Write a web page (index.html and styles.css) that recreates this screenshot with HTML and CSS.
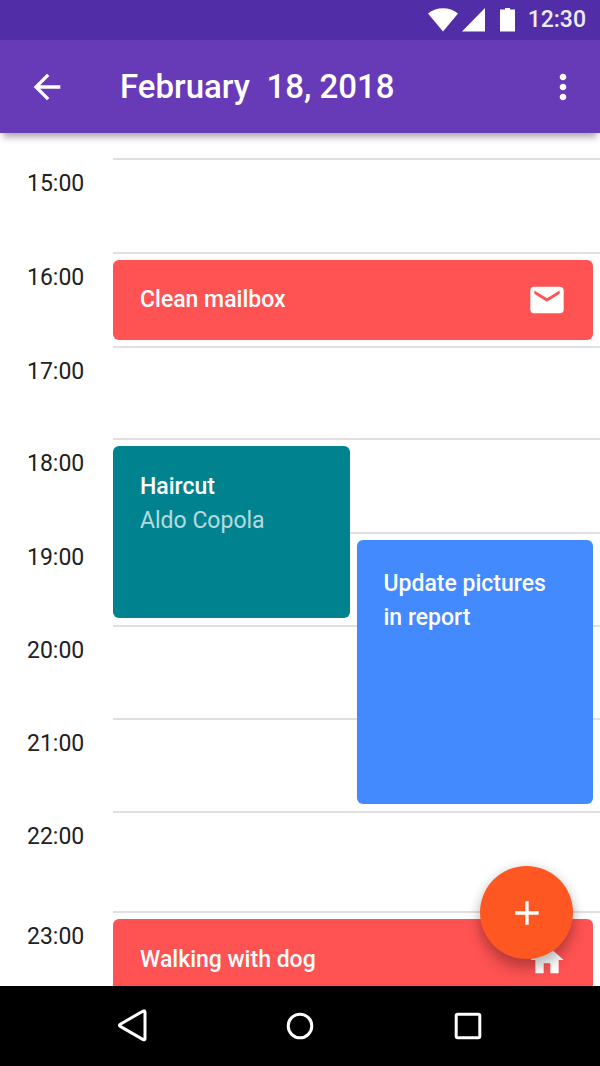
FILE: index.html
```html
<!DOCTYPE html>
<html lang="en">
<head>
<meta charset="utf-8">
<meta name="viewport" content="width=device-width, initial-scale=1">
<title>February 18, 2018</title>
<link rel="stylesheet" href="styles.css">
</head>
<body>
<div class="screen">
  <div class="status-bar">
    <svg class="status-icons" viewBox="0 0 88 24" aria-hidden="true">
      <path d="M0 5.5C8.500-1.500 21.500-1.500 30 5.500L15 23.500Z"/>
      <path d="M57 0V23.500H34Z"/>
      <path d="M72 1.500h5V0h5v1.500h5v22H72Z"/>
    </svg>
    <time class="clock">12:30</time>
  </div>

  <header class="app-bar">
    <button class="icon-button" type="button" aria-label="Back">
      <svg class="icon" viewBox="0 0 24 24"><path d="M20 11H7.830l5.590-5.590L12 4l-8 8 8 8 1.410-1.410L7.830 13H20z"/></svg>
    </button>
    <h1 class="app-title">February&nbsp; 18, 2018</h1>
    <button class="icon-button" type="button" aria-label="More options">
      <svg class="icon" viewBox="0 0 24 24"><path d="M12 8c1.100 0 2-.9 2-2s-.9-2-2-2-2 .9-2 2 .9 2 2 2zm0 2c-1.100 0-2 .9-2 2s.9 2 2 2 2-.9 2-2-.9-2-2-2zm0 6c-1.100 0-2 .9-2 2s.9 2 2 2 2-.9 2-2-.9-2-2-2z"/></svg>
    </button>
  </header>

  <main class="content">
    <div class="schedule">
      <time class="hour row-15">15:00</time><div class="line row-15"></div>
      <time class="hour row-16">16:00</time><div class="line row-16"></div>
      <time class="hour row-17">17:00</time><div class="line row-17"></div>
      <time class="hour row-18">18:00</time><div class="line row-18"></div>
      <time class="hour row-19">19:00</time><div class="line row-19"></div>
      <time class="hour row-20">20:00</time><div class="line row-20"></div>
      <time class="hour row-21">21:00</time><div class="line row-21"></div>
      <time class="hour row-22">22:00</time><div class="line row-22"></div>
      <time class="hour row-23">23:00</time><div class="line row-23"></div>

      <article class="event event-mailbox">
        <h2 class="event-title">Clean mailbox</h2>
        <svg class="icon event-icon" viewBox="0 0 24 24" aria-hidden="true"><path d="M20 4H4c-1.100 0-1.990.9-1.990 2L2 18c0 1.100.9 2 2 2h16c1.100 0 2-.9 2-2V6c0-1.100-.9-2-2-2zm-.4 4.250l-7.600 4.750-7.600-4.750V6.250L12 11l7.600-4.750z"/></svg>
      </article>
      <article class="event event-haircut">
        <div>
          <h2 class="event-title">Haircut</h2>
          <p class="event-note">Aldo Copola</p>
        </div>
      </article>
      <article class="event event-report">
        <h2 class="event-title">Update pictures in report</h2>
      </article>
      <article class="event event-dog">
        <h2 class="event-title">Walking with dog</h2>
        <svg class="icon event-icon" viewBox="0 0 24 24" aria-hidden="true"><path d="M10 20v-6h4v6h5v-8h3L12 3 2 12h3v8z"/></svg>
      </article>
    </div>
    <button class="fab" type="button" aria-label="Add event">
      <svg class="icon" viewBox="0 0 24 24"><path d="M19 13h-6v6h-2v-6H5v-2h6V5h2v6h6v2z"/></svg>
    </button>
  </main>

  <nav class="nav-bar" aria-label="System">
    <button class="nav-button" type="button" aria-label="Back">
      <svg class="nav-icon" viewBox="0 0 40 40"><path d="M8.300 18.200Q6.500 19.300 8.300 20.400L31.200 33.600Q33 34.400 33 32.400V6.200Q33 4.200 31.200 5Z"/></svg>
    </button>
    <button class="nav-button" type="button" aria-label="Home">
      <svg class="nav-icon" viewBox="0 0 40 40"><circle cx="20" cy="20" r="11.800"/></svg>
    </button>
    <button class="nav-button" type="button" aria-label="Overview">
      <svg class="nav-icon" viewBox="0 0 40 40"><rect x="8.200" y="8.200" width="23.600" height="23.600" rx="1.500"/></svg>
    </button>
  </nav>
</div>
</body>
</html>
```
FILE: styles.css
```css
* {
  box-sizing: border-box;
}

body {
  margin: 0;
  background: #fff;
  color: #212121;
  font-family: Roboto, "Liberation Sans", sans-serif;
  font-size: 23px;
  line-height: 34px;
}

h1,
h2,
p {
  margin: 0;
}

button {
  display: grid;
  place-items: center;
  padding: 0;
  border: 0;
  background: none;
  color: inherit;
  cursor: pointer;
}

.screen {
  display: flex;
  flex-direction: column;
  height: 100vh;
}

.icon {
  display: block;
  flex: none;
  width: 40px;
  height: 40px;
  fill: currentColor;
}

/* Status bar */
.status-bar {
  display: flex;
  flex: none;
  align-items: center;
  justify-content: flex-end;
  gap: 12px;
  height: 40px;
  padding-right: 14px;
  background: #512da8;
  color: #fff;
}

.status-icons {
  width: 88px;
  height: 24px;
  fill: currentColor;
}

.clock {
  font-weight: 500;
  line-height: 36px;
  opacity: 0.9;
}

/* App bar */
.app-bar {
  position: relative;
  z-index: 1;
  display: flex;
  flex: none;
  align-items: center;
  height: 93px;
  padding: 0 17px 0 27px;
  background: #673ab7;
  color: #fff;
  box-shadow: 0 7px 7px -3px rgba(0, 0, 0, 0.35);
}

.icon-button {
  flex: none;
  width: 40px;
  height: 40px;
}

.app-title {
  flex: 1;
  padding-left: 53px;
  font-size: 33px;
  font-weight: 500;
  line-height: 40px;
}

/* Schedule */
.content {
  position: relative;
  flex: 1;
  min-height: 0;
  overflow: hidden;
}

.schedule {
  display: grid;
  grid-template-columns: 113px 1fr 7px 1fr 7px;
  grid-template-rows: 94px 94px 92px 94px 93px 93px 93px 100px 96px;
  height: 100%;
  padding-top: 25px;
  overflow: hidden;
}

.hour {
  grid-column: 1;
  padding: 9px 0 0 27px;
}

.line {
  grid-column: 2 / -1;
  height: 2px;
  background: #e0e0e0;
}

.row-15 { grid-row: 1; }
.row-16 { grid-row: 2; }
.row-17 { grid-row: 3; }
.row-18 { grid-row: 4; }
.row-19 { grid-row: 5; }
.row-20 { grid-row: 6; }
.row-21 { grid-row: 7; }
.row-22 { grid-row: 8; }
.row-23 { grid-row: 9; }

.event {
  display: flex;
  align-items: flex-start;
  justify-content: space-between;
  margin: 8px 0 7px;
  padding: 24px 26px 0 27px;
  border-radius: 6px;
  color: #fff;
}

.event-mailbox,
.event-dog {
  align-items: center;
  margin-bottom: 6px;
  padding-top: 0;
  background: #ff5252;
}

.event-mailbox {
  grid-area: 2 / 2 / 3 / 5;
}

.event-haircut {
  grid-area: 4 / 2 / 6 / 3;
  background: #00838f;
}

.event-report {
  grid-area: 5 / 4 / 8 / 5;
  padding-top: 27px;
  background: #448aff;
}

.event-dog {
  grid-area: 9 / 2 / 10 / 5;
}

.event-title {
  font-size: 23px;
  font-weight: 500;
}

.event-note {
  opacity: 0.7;
}

.fab {
  position: absolute;
  right: 27px;
  bottom: 27px;
  width: 93px;
  height: 93px;
  border-radius: 50%;
  background: #ff5722;
  color: #fff;
  box-shadow: 0 10px 14px rgba(0, 0, 0, 0.24), 0 0 12px rgba(0, 0, 0, 0.12);
}

/* System navigation */
.nav-bar {
  display: grid;
  flex: none;
  grid-template-columns: repeat(3, 28%);
  align-items: center;
  justify-content: center;
  height: 80px;
  background: #000;
}

.nav-button {
  height: 40px;
}

.nav-icon {
  width: 40px;
  height: 40px;
  fill: none;
  stroke: #fff;
  stroke-width: 3;
  stroke-linejoin: round;
}
```
